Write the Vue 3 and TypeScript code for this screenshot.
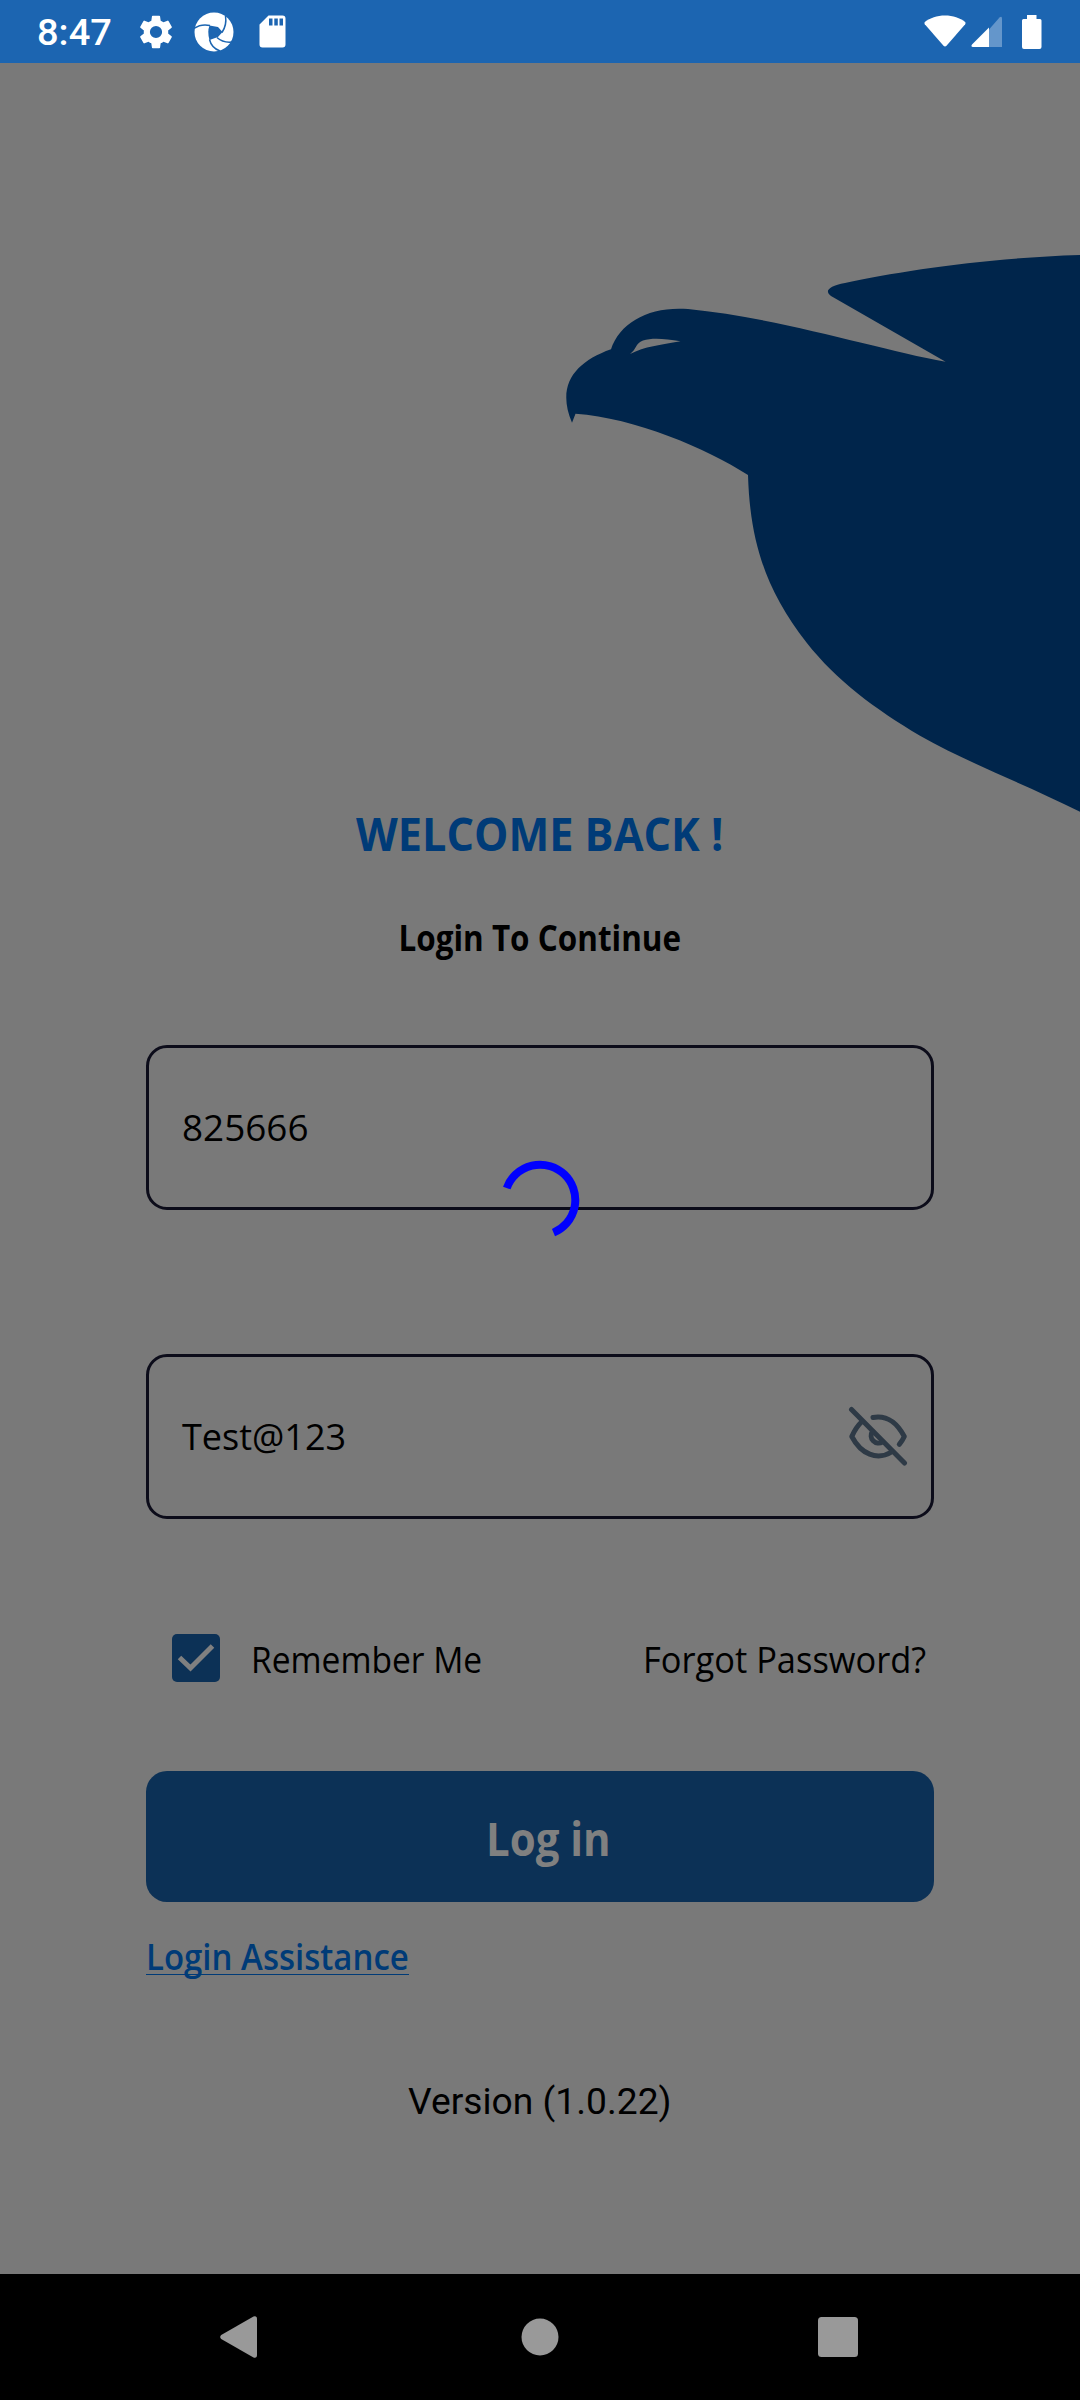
<script setup lang="ts">
import { ref } from 'vue'
import type { Directive } from 'vue'

const userId = ref('825666')
const password = ref('Test@123')
const remember = ref(true)

// Condenses a label horizontally so that it takes exactly the given width.
const vFit: Directive<HTMLElement, number> = {
  mounted(el, { value }) {
    el.style.transform = `scaleX(${value / el.offsetWidth})`
  },
}
</script>

<template>
  <div class="screen">
    <header class="status">
      <span v-fit="75" class="clock">8:47</span>
      <svg class="gear" width="34" height="34" viewBox="2 2 20 20">
        <path fill="#fff" d="M19.14 12.94c.04-.3.06-.61.06-.94s-.02-.64-.07-.94l2.03-1.58a.49.49 0 0 0 .12-.61l-1.92-3.32a.49.49 0 0 0-.59-.22l-2.39.96a7 7 0 0 0-1.62-.94l-.36-2.54a.48.48 0 0 0-.48-.41h-3.84a.47.47 0 0 0-.47.41l-.36 2.54c-.59.24-1.13.57-1.62.94l-2.39-.96a.48.48 0 0 0-.59.22L2.74 8.87a.48.48 0 0 0 .12.61l2.03 1.58c-.05.3-.09.63-.09.94s.02.64.07.94l-2.03 1.58a.49.49 0 0 0-.12.61l1.92 3.32c.12.22.37.29.59.22l2.39-.96c.5.38 1.03.7 1.62.94l.36 2.54c.05.24.24.41.48.41h3.84c.24 0 .44-.17.47-.41l.36-2.54c.59-.24 1.13-.56 1.62-.94l2.39.96c.22.08.47 0 .59-.22l1.92-3.32a.48.48 0 0 0-.12-.61zM12 15.6A3.6 3.6 0 1 1 12 8.4a3.6 3.6 0 0 1 0 7.2z" />
      </svg>
      <svg class="swirl" width="40" height="40" viewBox="0 0 40 40">
        <circle cx="20" cy="20" r="19.5" fill="#fff" />
        <path fill="#1c65b1" d="M15.5 13.5 L24 15 L28.5 20 L24 25 L15.5 28 Q13 20 15.5 13.5Z" />
        <g fill="none" stroke="#1c65b1" stroke-width="1.5">
          <path d="M0 16.5 Q7 11.5 16 13.5" />
          <path d="M31.5 4 Q33 13 28 20.5" />
          <path d="M38 30 Q29 31 23 25.5" />
          <path d="M26 39 Q17.500 36 15.500 27.500" />
        </g>
      </svg>
      <svg class="sd" width="27" height="34" viewBox="0 0 27 34">
        <path fill="#fff" d="M9.500 .5 H23.500 A3 3 0 0 1 26.500 3.500 V29.500 A3 3 0 0 1 23.500 32.500 H3.500 A3 3 0 0 1 .5 29.500 V9.500Z" />
        <path fill="#1c65b1" d="M10 3.500h3.500v7H10zM15.300 3.500h3.500v7h-3.500zM20.500 3.500H24v7h-3.500z" />
      </svg>
      <span class="spacer"></span>
      <svg class="wifi" width="42" height="34" viewBox="0 0 42 34">
        <path fill="#fff" d="M21 .5 C13 .5 6 3 .8 7 Q0 8 .8 9.200 L19.500 30.800 Q21 32.300 22.500 30.800 L41.200 9.200 Q42 8 41.200 7 C36 3 29 .5 21 .5Z" />
      </svg>
      <svg class="signal" width="32" height="32" viewBox="0 0 32 32">
        <path fill="#6496cb" d="M18 13.500 L28.500 1.500 Q31 -.5 31 2.500 V31 H18Z" />
        <path fill="#fff" d="M18 11.500 V31 H2 Q-.5 31 1 28.500Z" />
      </svg>
      <svg class="battery" width="20" height="34" viewBox="0 0 20 34">
        <path fill="#fff" d="M5 0h9.500v4H18a1.500 1.500 0 0 1 1.500 1.500V32a2 2 0 0 1-2 2H2a2 2 0 0 1-2-2V5.500A1.500 1.500 0 0 1 1.500 4H5z" />
      </svg>
    </header>

    <main class="page">
      <svg class="eagle" width="520" height="570" viewBox="560 250 520 570" aria-hidden="true">
        <path fill="#00254b" fill-rule="evenodd" d="M1080 255 C985 258 900 271 845 283 C829 286 824 291 831 296 L945.600 361.700 C880 350 780 318 688 309 C650 306 620 322 611 349.300 C575 362 556 385 572 422.700 L575.500 413.700 C635 418 706 448 748 475 C750 542 766 591 806.700 642.700 C836 680 875 709 920 735.700 C970 764 1025 784 1080 811.700Z M630 354 C637 349 635 343.500 643 340.500 C652 337.500 665 338.500 680.500 341.300 C660 345 645 346.500 630 354Z" />
      </svg>

      <h1 class="title"><span v-fit="367">WELCOME BACK !</span></h1>
      <h2 class="subtitle"><span v-fit="283">Login To Continue</span></h2>

      <div class="field first"><span v-fit="127">{{ userId }}</span></div>
      <div class="field second">
        <span v-fit="164">{{ password }}</span>
        <svg width="60" height="60" viewBox="848 1406 60 60" fill="none" stroke="#2e3a46" stroke-width="5" stroke-linecap="round" stroke-linejoin="round">
          <path d="M851.500 1409.500 L904.500 1463" />
          <path d="M862 1421.500 Q856 1427 851.800 1436.500 C861 1454 877 1461 891.500 1452" />
          <path d="M873 1417.500 C888 1415 897 1423 904.300 1436.500 Q902.500 1440.500 899.300 1444.300" />
          <path d="M872.500 1431.500 A7.300 7.300 0 0 0 882.500 1441.800" />
        </svg>
      </div>

      <div class="options">
        <span class="box">
          <svg v-if="remember" width="48" height="48" viewBox="0 0 48 48">
            <path d="M7.500 23.500 L18.500 34 L40.500 12" fill="none" stroke="#808080" stroke-width="5" />
          </svg>
        </span>
        <span v-fit="231" class="remember">Remember Me</span>
        <span class="spacer"></span>
        <span v-fit="283" class="forgot">Forgot Password?</span>
      </div>

      <div class="button"><span v-fit="125">Log in</span></div>
      <div class="assist"><span v-fit="263">Login Assistance</span></div>
      <div class="version"><span v-fit="264">Version (1.0.22)</span></div>

      <svg class="spinner" width="80" height="80" viewBox="500 1160 80 80">
        <path d="M506.800 1188 A35.300 35.300 0 1 1 553.500 1232.600" fill="none" stroke="#00f" stroke-width="8" />
      </svg>
    </main>

    <nav class="nav">
      <svg width="38" height="44" viewBox="0 0 38 44"><path fill="#999" d="M1.200 20 Q-.8 22 1.200 24 L33.500 42.500 Q37 43.500 37 40 V4 Q37 .5 33.500 1.500Z" /></svg>
      <svg class="home" width="38" height="38" viewBox="0 0 38 38"><circle cx="19" cy="19" r="18.500" fill="#999" /></svg>
      <svg width="40" height="40" viewBox="0 0 40 40"><rect width="40" height="40" rx="3.500" fill="#999" /></svg>
    </nav>
  </div>
</template>

<style>
body {
  background: #797979;
}
</style>

<style scoped>
.screen {
  width: 1080px;
  height: 2400px;
  display: flex;
  flex-direction: column;
  overflow: hidden;
  background: #797979;
  color: #000;
  font-family: 'Open Sans', 'Noto Sans', sans-serif;
}
.screen span {
  white-space: pre;
}
.status {
  height: 63px;
  flex: none;
  box-sizing: border-box;
  padding: 0 38px 0 37px;
  display: flex;
  align-items: center;
  background: #1c65b1;
}
.clock {
  color: #fff;
  font: 500 37px/44px Roboto, sans-serif;
  transform-origin: left;
  margin-top: 3px;
  flex: none;
  width: max-content;
}
.gear { margin-left: 29px; }
.swirl { margin-left: 21px; }
.sd { margin-left: 25px; }
.spacer { flex: 1; }
.signal { margin-left: 5px; }
.battery { margin-left: 19px; }

.page {
  position: relative;
  flex: 1;
  padding: 0 146px;
  display: flex;
  flex-direction: column;
}
.eagle {
  position: absolute;
  right: 0;
  top: 187px;
}
.spinner {
  position: absolute;
  left: 500px;
  top: 1097px;
}
.title,
.subtitle {
  margin: 0;
  display: flex;
  justify-content: center;
  font-weight: 700;
}
.title {
  margin-top: 738px;
  font-size: 47px;
  line-height: 64px;
  color: #003b77;
}
.subtitle {
  margin-top: 49px;
  font-size: 36px;
  line-height: 48px;
}
.field {
  box-sizing: border-box;
  height: 165px;
  border: 3px solid #0c0c1a;
  border-radius: 21px;
  padding: 0 23px 0 33px;
  display: flex;
  align-items: center;
  justify-content: space-between;
  font-size: 36px;
}
.field svg { margin-bottom: 2px; }
.field span,
.remember {
  transform-origin: left;
}
.field.first { margin-top: 83px; }
.field.second { margin-top: 144px; }
.options {
  margin-top: 115px;
  height: 48px;
  padding: 0 8px 0 26px;
  display: flex;
  align-items: center;
  font-size: 36px;
}
.box {
  width: 48px;
  height: 48px;
  border-radius: 5px;
  background: #0c3156;
}
.remember { margin-left: 31px; }
.forgot { transform-origin: right; }
.remember,
.forgot { padding-top: 3px; }
.button {
  margin-top: 89px;
  height: 131px;
  box-sizing: border-box;
  padding: 3px 0 0 16px;
  border-radius: 21px;
  background: #0c3156;
  color: #808080;
  font-size: 46px;
  font-weight: 700;
  display: flex;
  align-items: center;
  justify-content: center;
}
.assist {
  margin-top: 31px;
  display: flex;
  color: #003b77;
  font-size: 36px;
  font-weight: 600;
  line-height: 48px;
}
.assist span {
  transform-origin: left;
  height: 41px;
  border-bottom: 1px solid #003b77;
}
.version {
  margin-top: 104px;
  display: flex;
  justify-content: center;
  font: 400 37.500px/44px Roboto, sans-serif;
}
.nav {
  flex: none;
  height: 126px;
  box-sizing: border-box;
  padding: 0 222px 0 220px;
  display: flex;
  align-items: center;
  justify-content: space-between;
  background: #000;
}
.home { margin-left: 3px; }
</style>
